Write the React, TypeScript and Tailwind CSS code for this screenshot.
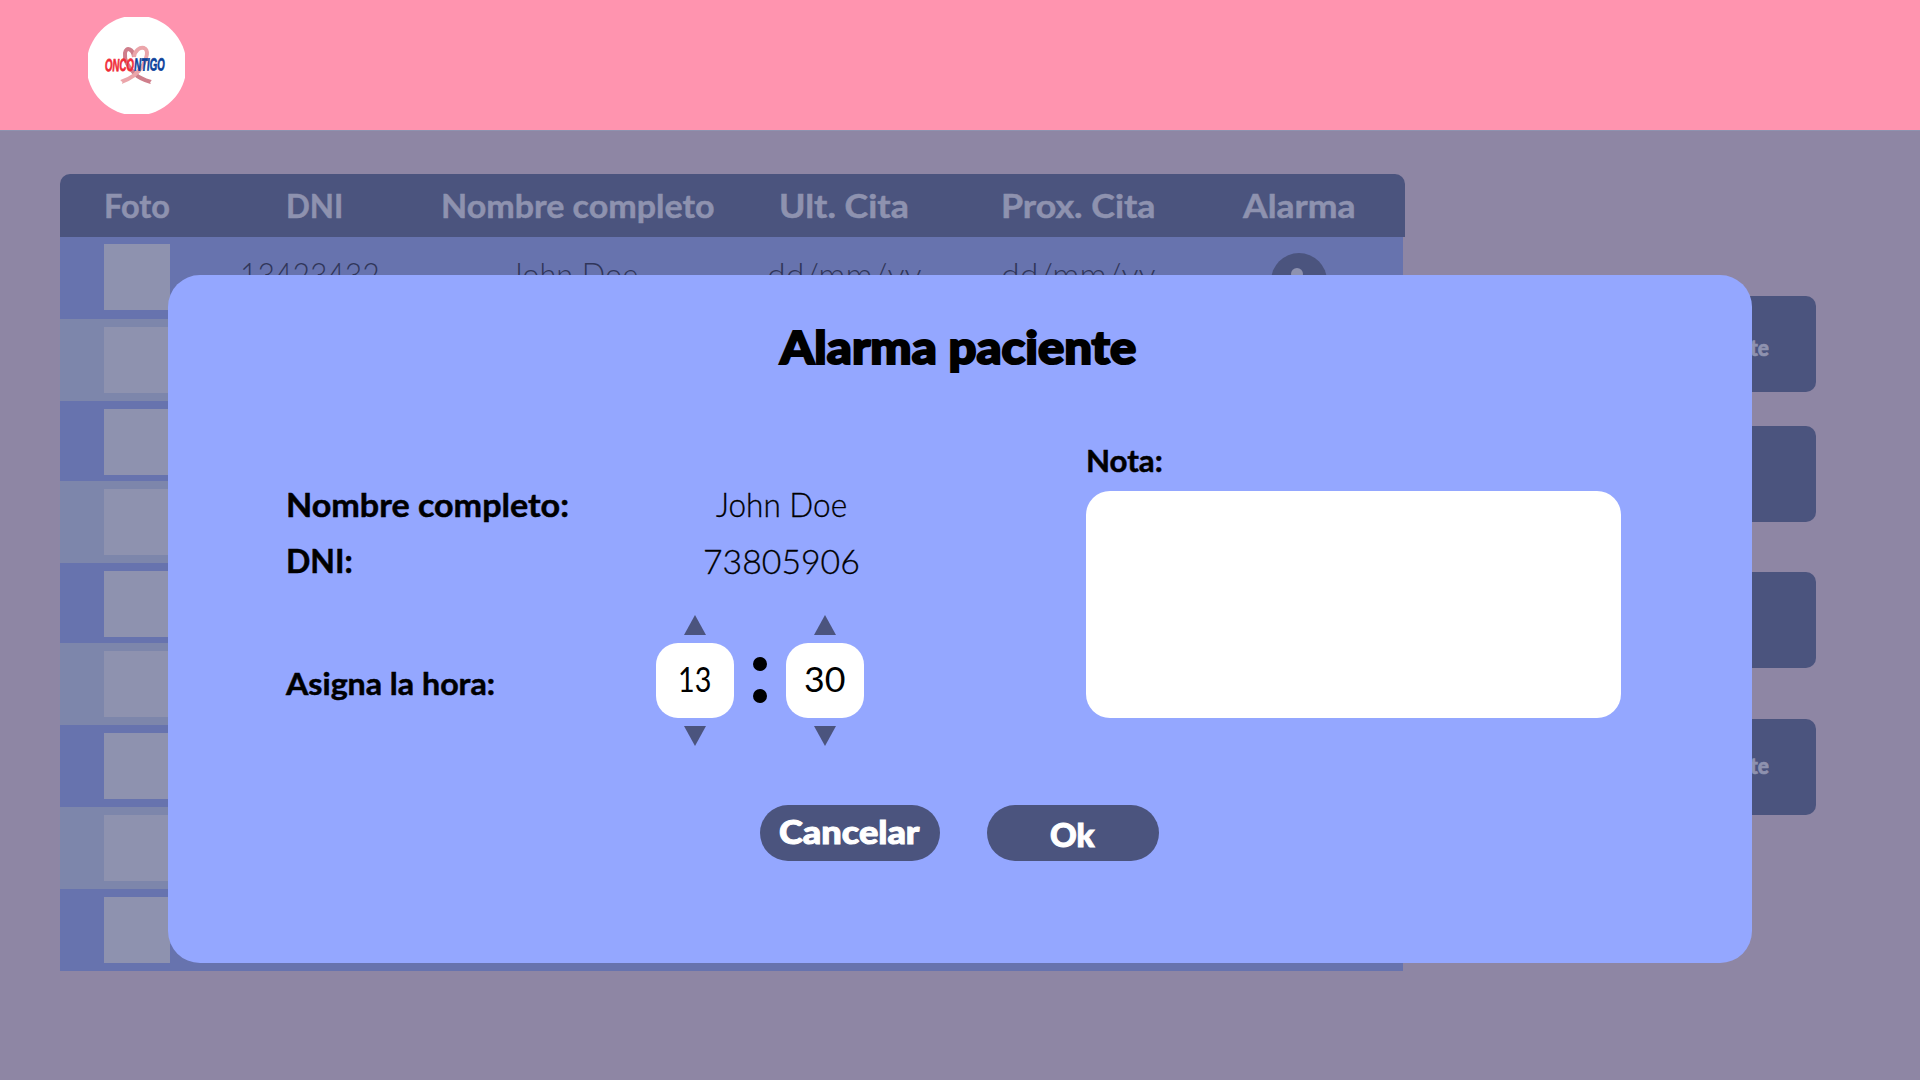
import React from 'react';

type LabelProps = { text: string; w: number; className?: string; size: number };

function Label({ text, w, size, className = '' }: LabelProps) {
  const ref = React.useRef<HTMLSpanElement>(null);
  const [sx, setSx] = React.useState(1);
  React.useLayoutEffect(() => {
    if (ref.current) setSx(w / ref.current.offsetWidth);
  }, [w, text, size]);
  return (
    <span className={`block shrink-0 text-left ${className}`} style={{ width: w }}>
      <span
        ref={ref}
        className="inline-block origin-left whitespace-nowrap leading-none"
        style={{ fontSize: size, transform: `scaleX(${sx})` }}
      >
        {text}
      </span>
    </span>
  );
}

function Logo() {
  return (
    <svg className="h-[97px] w-[97px]" viewBox="88 17 97 97">
      <circle cx="136.500" cy="65.500" r="50" fill="#fff" />
      <path d="M134 57C133 49 126 46 125 53C124 60 129 68 135 74C139 78 144 80 151 82" fill="none" stroke="#cf7e8b" strokeWidth="4" />
      <path d="M134 57C135 50 140 47 144 48C149 50 147 58 143 65C138 74 130 79 121 82" fill="none" stroke="#eba5aa" strokeWidth="4" />
      <path d="M119.500 80l3 2-1 3zM153 80.500l-3 1.500 2 3z" fill="#fff" />
      <text
        transform="translate(105 71.300) rotate(-1) scale(0.740 1)"
        fontFamily="'Liberation Sans Narrow', 'Liberation Sans', sans-serif"
        fontWeight="700"
        fontStyle="italic"
        fontSize="17.500"
        textLength="81"
        lengthAdjust="spacingAndGlyphs"
        strokeWidth="0.700"
      >
        <tspan fill="#f02c38" stroke="#f02c38">ONCO</tspan>
        <tspan fill="#0a419b" stroke="#0a419b">NTIGO</tspan>
      </text>
    </svg>
  );
}

const rowHeights = [
  { h: 'h-[82px] pt-[7px]', dark: true },
  { h: 'h-[82px] pt-[8px]', dark: false },
  { h: 'h-[80px] pt-[8px]', dark: true },
  { h: 'h-[82px] pt-[8px]', dark: false },
  { h: 'h-[80px] pt-[8px]', dark: true },
  { h: 'h-[82px] pt-[8px]', dark: false },
  { h: 'h-[82px] pt-[8px]', dark: true },
  { h: 'h-[82px] pt-[8px]', dark: false },
  { h: 'h-[82px] pt-[8px]', dark: true },
];

const columns = 'grid grid-cols-[154px_200px_326px_207px_262px_180px] justify-items-center';
const heading = '[-webkit-text-stroke:0.5px_currentColor]';

function PatientTable() {
  return (
    <div className="w-[1345px]">
      <div className={`${columns} ${heading} h-[63px] rounded-t-[10px] bg-[#4b547e] pt-[15px] font-bold text-[#8e92af]`}>
        <Label text="Foto" w={66} size={33} />
        <Label text="DNI" w={57} size={33} />
        <Label text="Nombre completo" w={273} size={33} />
        <Label text="Ult. Cita" w={130} size={33} />
        <Label text="Prox. Cita" w={155} size={33} />
        <Label text="Alarma" w={113} size={33} />
      </div>
      {rowHeights.map((row, i) => (
        <div key={i} className={`${row.h} ${columns} ${row.dark ? 'w-[1343px] bg-[#6773ae]' : 'w-[1343px] bg-[#7d86ab]'}`}>
          <div className="h-[66px] w-[66px] bg-[#8e92af]" />
          {i === 0 && (
            <>
              <Label text="13423432" w={140} size={34} className="mr-[8px] pt-[13px] font-light text-[#30365a]" />
              <Label text="John Doe" w={128} size={34} className="mr-[6px] pt-[13px] font-light text-[#30365a]" />
              <Label text="dd/mm/yy" w={154} size={33} className="pt-[14px] font-light text-[#30365a]" />
              <Label text="dd/mm/yy" w={154} size={33} className="pt-[14px] font-light text-[#30365a]" />
              <div className="mt-[9px] flex h-[56px] w-[56px] justify-center rounded-full bg-[#4b547e] pr-[4px] pt-[15px]">
                <div className="h-[12px] w-[12px] rounded-full bg-[#8e92af]" />
              </div>
            </>
          )}
        </div>
      ))}
    </div>
  );
}

const sideButtons = [
  { box: 'pt-[10px]', label: 'te' },
  { box: 'mt-[34px]', label: '' },
  { box: 'mt-[50px]', label: '' },
  { box: 'mt-[51px]', label: 'te' },
];

function Stepper({ value, w }: { value: string; w: number }) {
  return (
    <div className="flex w-[78px] flex-col items-center">
      <svg className="h-[20px] w-[22px]" viewBox="0 0 22 20"><path d="M11 0l11 20H0z" fill="#4b547e" /></svg>
      <div className="mt-[8px] flex h-[75px] w-[78px] items-center justify-center rounded-[22px] bg-white pb-[1px] pr-[2px]">
        <Label text={value} w={w} size={34} />
      </div>
      <svg className="mt-[8px] h-[20px] w-[22px]" viewBox="0 0 22 20"><path d="M0 0h22L11 20z" fill="#4b547e" /></svg>
    </div>
  );
}

function AlarmDialog() {
  return (
    <div className="absolute left-[168px] top-[275px] h-[688px] w-[1584px] rounded-[32px] bg-[#94a7ff] text-black">
      <div className="flex h-[151px] justify-center pr-[5px] pt-[50px]">
        <Label text="Alarma paciente" w={356} size={45} className="font-black [-webkit-text-stroke:2px_currentColor]" />
      </div>
      <div className="flex h-[379px]">
        <div className="w-[918px] pl-[118px]">
          <div className="flex pt-[62px]">
            <div className="w-[426px]"><Label text="Nombre completo:" w={283} size={33} className={`font-bold ${heading}`} /></div>
            <Label text="John Doe" w={131} size={33} className="ml-[4px] font-light [-webkit-text-stroke:0.3px_currentColor]" />
          </div>
          <div className="mt-[21px] flex">
            <div className="w-[417px]"><Label text="DNI:" w={67} size={33} className={`font-bold ${heading}`} /></div>
            <Label text="73805906" w={157} size={34} className="font-light [-webkit-text-stroke:0.3px_currentColor]" />
          </div>
          <div className="mt-[35px] flex">
            <div className="w-[370px] pt-[53px]"><Label text="Asigna la hora:" w={209} size={30} className={`font-bold ${heading}`} /></div>
            <Stepper value="13" w={33} />
            <div className="flex w-[52px] flex-col items-center gap-[18px] pt-[42px]">
              <div className="h-[14px] w-[14px] rounded-full bg-black" />
              <div className="h-[14px] w-[14px] rounded-full bg-black" />
            </div>
            <Stepper value="30" w={41} />
          </div>
        </div>
        <div>
          <div className="h-[65px] pt-[19px]"><Label text="Nota:" w={77} size={30} className={`font-bold ${heading}`} /></div>
          <div className="h-[227px] w-[535px] rounded-[24px] bg-white" />
        </div>
      </div>
      <div className="flex gap-[47px] pl-[592px] font-black text-white [-webkit-text-stroke:1px_currentColor]">
        <button className="flex h-[56px] w-[180px] justify-center rounded-[28px] bg-[#4b547e] pr-[2px] pt-[10px]">
          <Label text="Cancelar" w={140} size={33} />
        </button>
        <button className="flex h-[56px] w-[172px] justify-center rounded-[28px] bg-[#4b547e] pr-[1px] pt-[13px]">
          <Label text="Ok" w={45} size={33} />
        </button>
      </div>
    </div>
  );
}

export default function App() {
  return (
    <div className="relative h-[1080px] w-[1920px] overflow-hidden bg-[#8e86a4] font-['Lato',sans-serif]">
      <header className="flex h-[130px] bg-[#ff94af] pl-[88px] pt-[17px]">
        <Logo />
      </header>
      <main className="flex border-t border-[#8e92af] pl-[60px] pt-[43px]">
        <PatientTable />
        <aside className="ml-[95px] pt-[122px]">
          {sideButtons.map((b, i) => (
            <div key={i} className={`${b.box} flex h-[96px] w-[316px] items-center justify-end rounded-[10px] bg-[#4b547e] pr-[47px]`}>
              {b.label && <Label text={b.label} w={19} size={23} className="font-black text-[#8e92af] [-webkit-text-stroke:0.7px_currentColor]" />}
            </div>
          ))}
        </aside>
      </main>
      <AlarmDialog />
    </div>
  );
}
